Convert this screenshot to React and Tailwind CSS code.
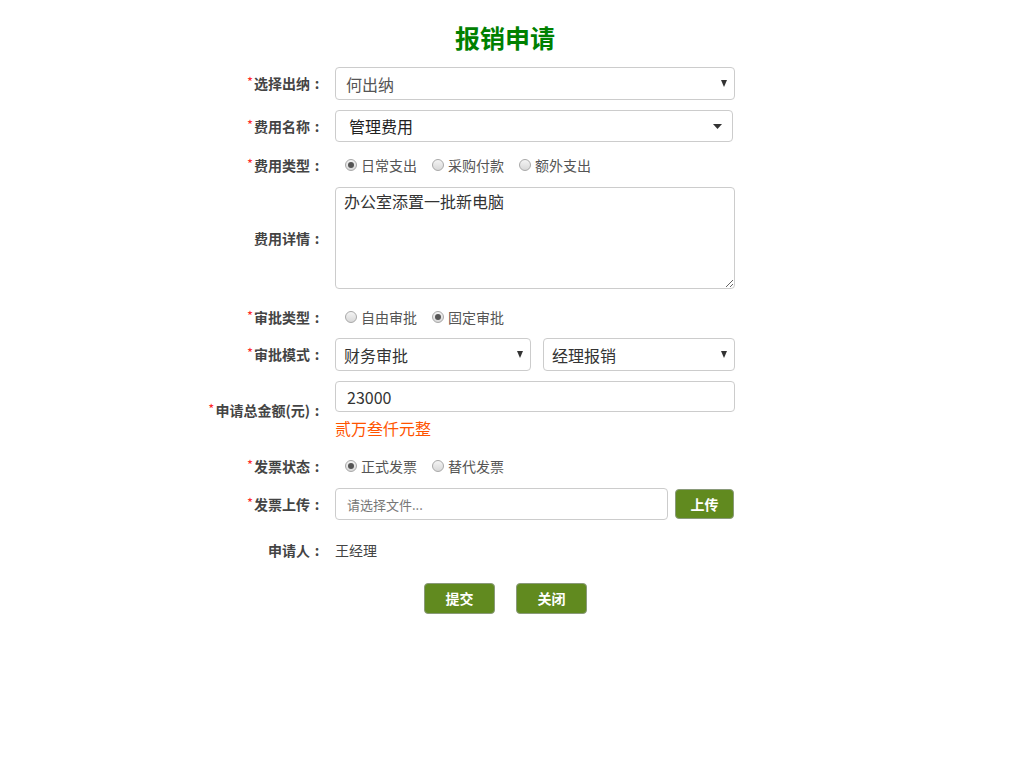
import { useState } from 'react';

const FONT = { fontFamily: '"Noto Sans CJK SC", "Noto Sans", sans-serif' };

function Label({ children, required = true }) {
  return (
    <div className="w-[135px] shrink-0 pr-[11px] flex items-center justify-end text-[14px] font-bold text-[#444] whitespace-nowrap">
      {required && <span className="text-[13px] font-normal text-[#ff2a2a] -mt-[3px] mr-[1px]">*</span>}
      {children}
      <span className="w-[14px] text-center">:</span>
    </div>
  );
}

function Radio({ checked, label, onClick }) {
  return (
    <button type="button" onClick={onClick} className="flex items-center gap-[4px] text-[14px] text-[#555]">
      <span className="w-[12px] h-[12px] rounded-full border border-[#a8a8a8] bg-gradient-to-b from-[#f4f4f4] to-[#d8d8d8] flex items-center justify-center">
        {checked && <span className="w-[6px] h-[6px] rounded-full bg-[#555]" />}
      </span>
      {label}
    </button>
  );
}

function RadioGroup({ options, value, onChange }) {
  return (
    <div className="flex items-center gap-[15px] pl-[10px]">
      {options.map(o => (
        <Radio key={o} label={o} checked={value === o} onClick={() => onChange(o)} />
      ))}
    </div>
  );
}

function Arrow({ wide }) {
  return wide ? (
    <svg width="9" height="5" viewBox="0 0 9 5"><path d="M0 0h9L4.5 5z" fill="#333" /></svg>
  ) : (
    <svg width="6" height="7" viewBox="0 0 6 7"><path d="M0 0h6L3 7z" fill="#333" /></svg>
  );
}

function Select({ value, className, text, pad, wide }) {
  return (
    <div className={`flex items-center justify-between border border-[#ccc] rounded-[4px] bg-white ${className}`}>
      <span className={`text-[16px] ${text} ${pad}`}>{value}</span>
      <span className={wide ? 'pr-[10px]' : 'pr-[7px]'}><Arrow wide={wide} /></span>
    </div>
  );
}

export default function App() {
  const [feeType, setFeeType] = useState('日常支出');
  const [approveType, setApproveType] = useState('固定审批');
  const [invoice, setInvoice] = useState('正式发票');

  return (
    <div className="w-full min-h-[768px] bg-white" style={FONT}>
      <h1 className="pt-[19px] pr-[14px] h-[55px] text-center text-[25px] leading-[36px] font-bold text-[#008000]">报销申请</h1>

      <div className="w-[624px] mx-auto">
        {/* 选择出纳 */}
        <div className="flex items-center mt-[12px]">
          <Label>选择出纳</Label>
          <Select value="何出纳" className="w-[400px] h-[33px]" text="text-[#555]" pad="pl-[10px]" />
        </div>

        {/* 费用名称 */}
        <div className="flex items-center mt-[10px]">
          <Label>费用名称</Label>
          <Select value="管理费用" className="w-[398px] h-[32px]" text="text-[#222]" pad="pl-[13px]" wide />
        </div>

        {/* 费用类型 */}
        <div className="flex items-center h-[24px] mt-[11px]">
          <Label>费用类型</Label>
          <RadioGroup options={['日常支出', '采购付款', '额外支出']} value={feeType} onChange={setFeeType} />
        </div>

        {/* 费用详情 */}
        <div className="flex items-center mt-[10px]">
          <Label required={false}>费用详情</Label>
          <textarea
            defaultValue="办公室添置一批新电脑"
            className="w-[400px] h-[102px] border border-[#ccc] rounded-[4px] px-[8px] py-0 text-[16px] leading-[26px] text-[#333] outline-none"
          />
        </div>

        {/* 审批类型 */}
        <div className="flex items-center h-[24px] mt-[16px]">
          <Label>审批类型</Label>
          <RadioGroup options={['自由审批', '固定审批']} value={approveType} onChange={setApproveType} />
        </div>

        {/* 审批模式 */}
        <div className="flex items-center mt-[9px]">
          <Label>审批模式</Label>
          <div className="flex gap-[12px]">
            <Select value="财务审批" className="w-[196px] h-[33px]" text="text-[#333]" pad="pl-[8px]" />
            <Select value="经理报销" className="w-[192px] h-[33px]" text="text-[#333]" pad="pl-[8px]" />
          </div>
        </div>

        {/* 申请总金额 */}
        <div className="flex items-center mt-[10px]">
          <Label>申请总金额(元)</Label>
          <div className="w-[400px]">
            <input
              defaultValue="23000"
              className="w-full h-[31px] border border-[#ccc] rounded-[4px] px-[11px] text-[16px] text-[#333] outline-none"
            />
            <div className="mt-[5px] h-[23px] text-[16px] leading-[23px] text-[#ff5400]">贰万叁仟元整</div>
          </div>
        </div>

        {/* 发票状态 */}
        <div className="flex items-center h-[24px] mt-[14px]">
          <Label>发票状态</Label>
          <RadioGroup options={['正式发票', '替代发票']} value={invoice} onChange={setInvoice} />
        </div>

        {/* 发票上传 */}
        <div className="flex items-center mt-[10px]">
          <Label>发票上传</Label>
          <div className="flex items-center gap-[7px]">
            <input
              placeholder="请选择文件..."
              className="w-[333px] h-[32px] border border-[#ccc] rounded-[4px] px-[11px] text-[13px] text-[#333] placeholder:text-[#777] outline-none"
            />
            <button className="w-[59px] h-[30px] rounded-[4px] border border-[#8a9a7a] bg-[#618a1f] text-white text-[14px] font-bold">上传</button>
          </div>
        </div>

        {/* 申请人 */}
        <div className="flex items-center h-[20px] mt-[20px]">
          <Label required={false}>申请人</Label>
          <span className="text-[14px] text-[#444]">王经理</span>
        </div>

        <div className="flex justify-center gap-[21px] mt-[23px] pr-[13px]">
          <button className="w-[71px] h-[31px] rounded-[4px] border border-[#8a9a7a] bg-[#618a1f] text-white text-[14px] font-bold">提交</button>
          <button className="w-[71px] h-[31px] rounded-[4px] border border-[#8a9a7a] bg-[#618a1f] text-white text-[14px] font-bold">关闭</button>
        </div>
      </div>
    </div>
  );
}
